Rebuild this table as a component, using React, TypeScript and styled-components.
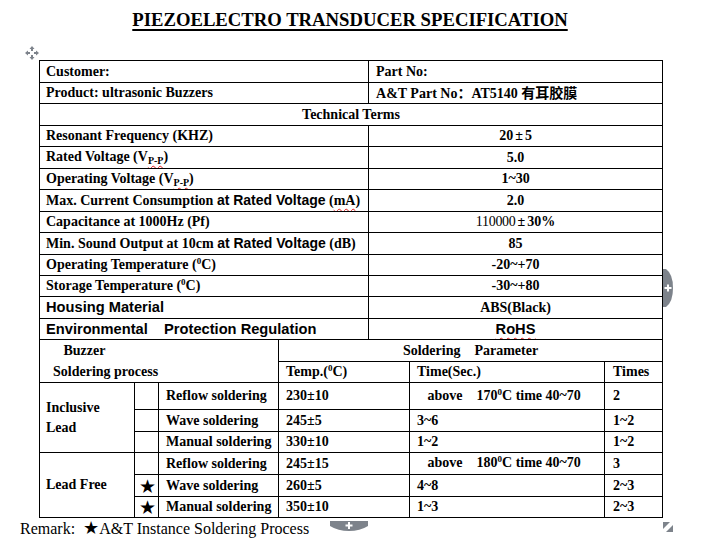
import React from "react";
import styled, { createGlobalStyle } from "styled-components";

const GlobalStyle = createGlobalStyle`
  html, body { margin: 0; padding: 0; background: #fff; }
  body { font-family: "Liberation Serif", "Times New Roman", serif; color: #000; }
`;

const Page = styled.div`
  width: 660px;
  padding: 9px 0 0 20px;
`;

const Title = styled.h1`
  margin: 0;
  text-align: center;
  font-size: 18.7px;
  font-weight: bold;
  text-decoration: underline;
  text-decoration-thickness: 2px;
  text-underline-offset: 3px;
  line-height: 22px;
  letter-spacing: 0;
`;

const SheetWrap = styled.div`
  position: relative;
  margin: 29px 0 0 19px;
  width: 623px;
`;

const Sheet = styled.table`
  border-collapse: collapse;
  table-layout: fixed;
  width: 623px;
  font-size: 14px;
  font-weight: bold;
`;

const Row = styled.tr<{ $h: number }>`
  height: ${(p) => p.$h}px;
`;

const Cell = styled.td<{ $align?: "left" | "center"; $pl?: number; $lh?: number }>`
  border: 1px solid #000;
  padding: 0 0 0 ${(p) => (p.$align === "center" ? 0 : p.$pl ?? 6)}px;
  text-align: ${(p) => p.$align ?? "left"};
  vertical-align: middle;
  line-height: ${(p) => p.$lh ?? 16}px;
  white-space: pre;
  overflow: hidden;
`;

const StarCell = styled(Cell)`
  font-family: "DejaVu Sans", sans-serif;
  font-size: 19px;
  text-align: center;
  padding: 0 0 0 2px;
`;

const Sans = styled.span<{ $size?: number }>`
  font-family: "Liberation Sans", Arial, sans-serif;
  font-size: ${(p) => p.$size ?? 14}px;
  font-weight: bold;
`;

const Cjk = styled.span`
  font-family: "Noto Sans CJK SC", sans-serif;
  font-size: 14px;
  font-weight: bold;
`;

const Wide = styled.span`
  display: inline-block;
  margin: 0 2px;
`;

const Thin = styled.span`
  font-weight: normal;
  font-size: 14px;
  letter-spacing: -0.3px;
`;

const Sub = styled.span<{ $wavy?: boolean }>`
  font-size: 10px;
  position: relative;
  top: 3px;
  text-decoration: ${(p) => (p.$wavy ? "underline wavy #e02020" : "none")};
  text-decoration-thickness: 1px;
  text-underline-offset: 1px;
`;

const Sup = styled.span`
  font-size: 9px;
  position: relative;
  top: -5px;
`;

const Squiggle = styled.span`
  text-decoration: underline wavy #e02020;
  text-decoration-thickness: 1px;
  text-underline-offset: 3px;
`;

const Remark = styled.div`
  margin-top: 1px;
  font-size: 16px;
  line-height: 20px;
  white-space: pre;
`;

const RemarkStar = styled.span`
  font-family: "DejaVu Sans", sans-serif;
  font-size: 18px;
  line-height: 16px;
`;

const MoveHandle = styled.div`
  position: absolute;
  left: -14px;
  top: -14px;
  width: 14px;
  height: 14px;
`;

const SideTab = styled.div`
  position: absolute;
  left: 624px;
  top: 209px;
  width: 11px;
  height: 38px;
`;

const BottomTab = styled.div`
  position: absolute;
  left: 291px;
  top: 458px;
  width: 38px;
  height: 11px;
`;

const ResizeCorner = styled.div`
  position: absolute;
  left: 624px;
  top: 458px;
  width: 10px;
  height: 10px;
`;

const GRAY = "#7d838b";

const MoveIcon = () => (
  <svg width="14" height="14" viewBox="0 0 14 14">
    <g fill={GRAY}>
      <polygon points="7,0 4.5,3 9.5,3" />
      <polygon points="7,14 4.5,11 9.5,11" />
      <polygon points="0,7 3,4.5 3,9.5" />
      <polygon points="14,7 11,4.5 11,9.5" />
      <rect x="6" y="3" width="2" height="2" />
      <rect x="6" y="9" width="2" height="2" />
      <rect x="3" y="6" width="2" height="2" />
      <rect x="9" y="6" width="2" height="2" />
    </g>
  </svg>
);

const SideTabIcon = () => (
  <svg width="11" height="38" viewBox="0 0 11 38">
    <path d="M0 0 L3 0 Q10 5 10 19 Q10 33 3 38 L0 38 Z" fill={GRAY} />
    <rect x="1.5" y="18" width="7" height="2" fill="#fff" />
    <rect x="4" y="15.5" width="2" height="7" fill="#fff" />
  </svg>
);

const BottomTabIcon = () => (
  <svg width="38" height="11" viewBox="0 0 38 11">
    <path d="M0 0 L38 0 L38 5 Q30 10 19 10 Q8 10 0 5 Z" fill={GRAY} />
    <rect x="15.5" y="3.5" width="7" height="2" fill="#fff" />
    <rect x="18" y="1" width="2" height="7" fill="#fff" />
  </svg>
);

const ResizeIcon = () => (
  <svg width="10" height="10" viewBox="0 0 10 10">
    <polygon points="0,0 7,0 0,7" fill={GRAY} />
    <polygon points="10,3 10,10 3,10" fill={GRAY} />
  </svg>
);

type Spec = { label: React.ReactNode; value: React.ReactNode; h: number };

const specs: Spec[] = [
  { label: "Resonant Frequency (KHZ)", value: <>20<Wide>±</Wide>5</>, h: 21 },
  { label: <>Rated Voltage (V<Sub $wavy>P-P</Sub>)</>, value: "5.0", h: 22 },
  { label: <>Operating Voltage (V<Sub $wavy>P-P</Sub>)</>, value: "1~30", h: 21 },
  {
    label: (
      <>
        Max. Current Consumption <Sans>at Rated Voltage</Sans> (<Squiggle>mA</Squiggle>)
      </>
    ),
    value: "2.0",
    h: 22,
  },
  { label: "Capacitance at 1000Hz (Pf)", value: <><Thin>110000</Thin><Wide>±</Wide>30%</>, h: 21 },
  {
    label: (
      <>
        Min. Sound Output at 10cm <Sans>at Rated Voltage</Sans> (dB)
      </>
    ),
    value: "85",
    h: 22,
  },
  { label: <>Operating Temperature (<Sup>0</Sup>C)</>, value: "-20~+70", h: 21 },
  { label: <>Storage Temperature (<Sup>0</Sup>C)</>, value: "-30~+80", h: 21 },
  { label: <Sans $size={14.67}>Housing Material</Sans>, value: "ABS(Black)", h: 22 },
  {
    label: <Sans $size={14.67}>{"Environmental    Protection Regulation"}</Sans>,
    value: (
      <Sans $size={14.67}>
        <Squiggle>RoHS</Squiggle>
      </Sans>
    ),
    h: 21,
  },
];

type Proc = { name: string; star: boolean; temp: string; time: string; times: string; h: number };

const inclusive: Proc[] = [
  { name: "Reflow soldering", star: false, temp: "230±10", time: "above", times: "2", h: 27 },
  { name: "Wave soldering", star: false, temp: "245±5", time: "3~6", times: "1~2", h: 22 },
  { name: "Manual soldering", star: false, temp: "330±10", time: "1~2", times: "1~2", h: 21 },
];

const leadFree: Proc[] = [
  { name: "Reflow soldering", star: false, temp: "245±15", time: "above", times: "3", h: 22 },
  { name: "Wave soldering", star: true, temp: "260±5", time: "4~8", times: "2~3", h: 22 },
  { name: "Manual soldering", star: true, temp: "350±10", time: "1~3", times: "2~3", h: 21 },
];

const TimeText = ({ t, deg }: { t: string; deg: string }) =>
  t === "above" ? (
    <>
      {"   above    "}
      {deg}
      <Sup>0</Sup>C time 40~70
    </>
  ) : (
    <>{t}</>
  );

const ProcRows = ({ group, label, deg }: { group: Proc[]; label: React.ReactNode; deg: string }) => (
  <>
    {group.map((p, i) => (
      <Row $h={p.h} key={p.name}>
        {i === 0 && (
          <Cell rowSpan={group.length} $pl={6} $lh={20}>
            {label}
          </Cell>
        )}
        <StarCell>{p.star ? "★" : ""}</StarCell>
        <Cell $pl={7}>{p.name}</Cell>
        <Cell colSpan={2} $pl={7}>
          {p.temp}
        </Cell>
        <Cell $pl={7}>
          <TimeText t={p.time} deg={deg} />
        </Cell>
        <Cell $pl={8}>{p.times}</Cell>
      </Row>
    ))}
  </>
);

export default function App() {
  return (
    <>
      <GlobalStyle />
      <Page>
        <Title>PIEZOELECTRO TRANSDUCER SPECIFICATION</Title>
        <SheetWrap>
          <Sheet>
            <colgroup>
              <col style={{ width: 95 }} />
              <col style={{ width: 24 }} />
              <col style={{ width: 120 }} />
              <col style={{ width: 90 }} />
              <col style={{ width: 41 }} />
              <col style={{ width: 195 }} />
              <col style={{ width: 58 }} />
            </colgroup>
            <tbody>
              <Row $h={22}>
                <Cell colSpan={4}>Customer:</Cell>
                <Cell colSpan={3} $pl={7}>
                  Part No:
                </Cell>
              </Row>
              <Row $h={21}>
                <Cell colSpan={4}>Product: ultrasonic Buzzers</Cell>
                <Cell colSpan={3} $pl={7}>
                  A&amp;T Part No<Cjk>：</Cjk>AT5140 <Cjk>有耳胶膜</Cjk>
                </Cell>
              </Row>
              <Row $h={22}>
                <Cell colSpan={7} $align="center">
                  Technical Terms
                </Cell>
              </Row>
              {specs.map((s, i) => (
                <Row $h={s.h} key={i}>
                  <Cell colSpan={4}>{s.label}</Cell>
                  <Cell colSpan={3} $align="center">
                    {s.value}
                  </Cell>
                </Row>
              ))}
              <Row $h={22}>
                <Cell colSpan={3} rowSpan={2} $pl={13} $lh={21}>
                  {"   Buzzer\nSoldering process"}
                </Cell>
                <Cell colSpan={4} $align="center">
                  {"Soldering    Parameter"}
                </Cell>
              </Row>
              <Row $h={21}>
                <Cell colSpan={2} $pl={7}>
                  Temp.(<Sup>0</Sup>C)
                </Cell>
                <Cell $pl={7}>Time(Sec.)</Cell>
                <Cell $pl={8}>Times</Cell>
              </Row>
              <ProcRows group={inclusive} label={"Inclusive\nLead"} deg="170" />
              <ProcRows group={leadFree} label="Lead Free" deg="180" />
            </tbody>
          </Sheet>
          <MoveHandle>
            <MoveIcon />
          </MoveHandle>
          <SideTab>
            <SideTabIcon />
          </SideTab>
          <BottomTab>
            <BottomTabIcon />
          </BottomTab>
          <ResizeCorner>
            <ResizeIcon />
          </ResizeCorner>
        </SheetWrap>
        <Remark>
          {"Remark:  "}
          <RemarkStar>★</RemarkStar>A&amp;T Instance Soldering Process
        </Remark>
      </Page>
    </>
  );
}
